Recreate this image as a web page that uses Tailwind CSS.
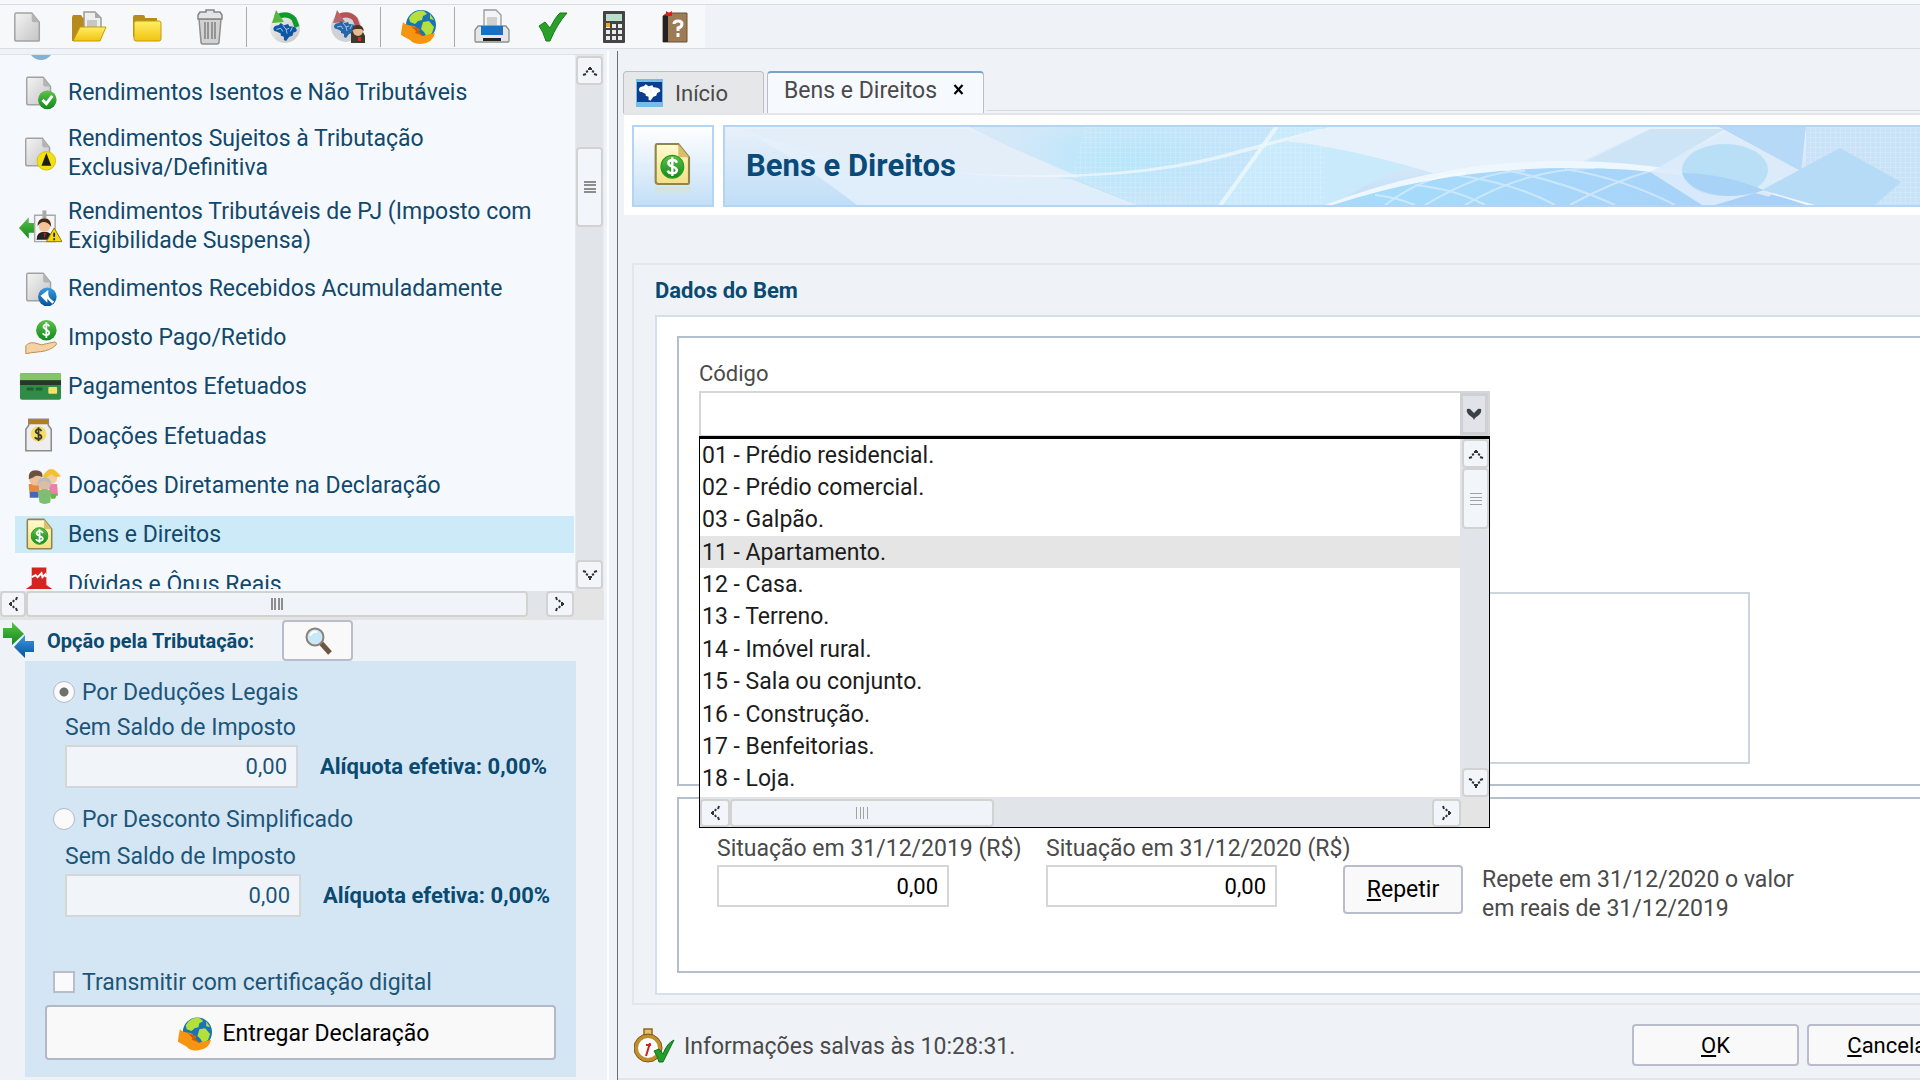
<!DOCTYPE html>
<html lang="pt-BR">
<head>
<meta charset="utf-8">
<title>Bens e Direitos</title>
<script src="https://cdn.jsdelivr.net/npm/@tailwindcss/browser@4"></script>
</head>
<body class="bg-[#eff3f8] font-['Roboto',sans-serif] text-[23px] leading-[29px] text-[#4a4a4a]">
<svg class="absolute h-0 w-0" aria-hidden="true">
  <defs>
    <linearGradient id="gGrey" x1="0" y1="0" x2="1" y2="1"><stop offset="0" stop-color="#f4f4f4"/><stop offset="1" stop-color="#c4c4c4"/></linearGradient>
    <linearGradient id="gYel" x1="0" y1="0" x2="0" y2="1"><stop offset="0" stop-color="#ffee66"/><stop offset="1" stop-color="#f2c40f"/></linearGradient>
    <linearGradient id="gCream" x1="0" y1="0" x2="0" y2="1"><stop offset="0" stop-color="#fffbd0"/><stop offset="1" stop-color="#f3df86"/></linearGradient>
    <linearGradient id="gGreen" x1="0" y1="0" x2="0" y2="1"><stop offset="0" stop-color="#5fc04a"/><stop offset="1" stop-color="#0f8a1c"/></linearGradient>
    <linearGradient id="gBlue" x1="0" y1="0" x2="0" y2="1"><stop offset="0" stop-color="#3b9be0"/><stop offset="1" stop-color="#07519c"/></linearGradient>
    <linearGradient id="gBan" x1="0" y1="0" x2="0" y2="1"><stop offset="0" stop-color="#e9f1fa"/><stop offset="1" stop-color="#c0def7"/></linearGradient>
  </defs>
  <symbol id="up" viewBox="0 0 16 12"><path d="M1 10l3-1M4 7l2-1M6 4h4M8 2v1M10 6l2 1M12 9l3 1" stroke="#333" stroke-width="2" fill="none"/></symbol>
  <symbol id="down" viewBox="0 0 16 12"><path d="M1 2l3 1M4 5l2 1M6 8h4M8 9v2M10 6l2-1M12 3l3-1" stroke="#333" stroke-width="2" fill="none"/></symbol>
  <symbol id="left" viewBox="0 0 12 16"><path d="M10 1l-1 3M7 4l-1 2M4 6v4M2 8h1M6 10l1 2M9 12l1 3" stroke="#333" stroke-width="2" fill="none"/></symbol>
  <symbol id="right" viewBox="0 0 12 16"><path d="M2 1l1 3M5 4l1 2M8 6v4M9 8h1M6 10l-1 2M3 12l-1 3" stroke="#333" stroke-width="2" fill="none"/></symbol>
  <symbol id="page" viewBox="0 0 32 34"><path d="M3 2h17l8 10v19q0 1-1 1H4q-2 0-2-2V4q0-2 1-2z" fill="url(#gGrey)" stroke="#a2a2a2" stroke-width="1.6"/><path d="M20 2v8q0 2 2 2h6z" fill="#b4b4b4"/></symbol>
  <symbol id="globe" viewBox="0 0 38 36"><circle cx="22" cy="16" r="15" fill="#1874b4"/><path d="M13 5q6-5 12-3l3 3-4 2-1 4-4 1-3 3-5-2-1-4zM24 13l6-1 5 6-2 6-5 4-3-5-3-3zM31 5l4 6-4-1z" fill="#b4e03c"/><path d="M4 13q2 3 11 4l6 4-3 2 5 4 13-3q-2 10-14 11-8 0-11-4l-9-5q0-3 2-13z" fill="#f79410"/><path d="M12 17l9 3-2 2 6 5-9-3 1-2z" fill="#cf5c05"/></symbol>
  <symbol id="brazil" viewBox="0 0 24 18"><path d="M1 6q1-3 5-3l2-2 3 2 4-1 1 2q6 0 7 3 1 2-3 3l-1 3-3 1-3 4-2-1 0-3-3-1 0-2-4-2q-3 0-3-3z"/><path d="M4 7l4-1 2 3M10 3l3 4 3-1M13 7l1 4M19 5l-2 4" stroke="#dfe8f2" stroke-width=".7" fill="none"/></symbol>
  <symbol id="moneydoc" viewBox="0 0 30 34"><path d="M3 2h16l8 10v19q0 1-1 1H4q-2 0-2-2V4q0-2 1-2z" fill="url(#gCream)" stroke="#93854a" stroke-width="1.6"/><path d="M19 2v10h8z" fill="#d9bf6b"/><circle cx="14.500" cy="19" r="8.500" fill="url(#gGreen)" stroke="#2e9d1f"/><path d="M18 16q-1-2-3.500-2t-3 2q0 2 3.200 3t3.200 3q-.5 2-3.400 2t-3.500-2M14.500 12v14" fill="none" stroke="#fff" stroke-width="1.800"/></symbol>
</svg>

<div class="flex min-h-screen flex-col overflow-hidden">
  <div class="h-1 shrink-0 bg-[#f7f8fa]"></div>
  <header class="flex h-[45px] shrink-0 border-y border-[#d6dde4]">
    <nav aria-label="Barra de ferramentas" class="flex w-[705px] items-center bg-[#f7f8fa] pt-px pl-3">
      <button class="w-[59px]" aria-label="Novo"><svg class="h-8 w-8"><use href="#page"/></svg></button>
      <button class="w-[60px]" aria-label="Abrir"><svg class="h-8 w-9" viewBox="0 0 36 32"><path d="M1 6l1-2h8l2 3h3v23H1z" fill="#b88a1a"/><path d="M13 1h11l6 6v17H13z" fill="#eee" stroke="#9a9a9a" stroke-width="1.500"/><path d="M24 1v6h6z" fill="#aaa"/><path d="M16 9h10v12H16z" fill="#c6c6c6"/><path d="M9 16h26L29 30H2z" fill="url(#gYel)" stroke="#c39a10"/></svg></button>
      <button class="w-[58px]" aria-label="Fechar"><svg class="h-8 w-8" viewBox="0 0 32 32"><path d="M2 26V6q0-2 2-2h8q2 0 2 3h12v4z" fill="#b88a1a"/><path d="M5 10h23q2 0 2 2v16q0 2-2 2H5q-2 0-2-2V12q0-2 2-2z" fill="url(#gYel)" stroke="#c39a10"/></svg></button>
      <button class="w-[57px] pl-[7px]" aria-label="Excluir"><svg class="h-9 w-7" viewBox="0 0 28 36"><path d="M3 10h22l-2 23q0 2-2 2H7q-2 0-2-2z" fill="#d2d2d2" stroke="#8f8f8f" stroke-width="1.500"/><path d="M2 6l2-3h6V1h8v2h6l2 3v4H2z" fill="#e4e4e4" stroke="#858585" stroke-width="1.500"/><path d="M9 13v17M12 13v17M16 13v17M19 13v17" stroke="#868686" stroke-width="1.600"/></svg></button>
      <span class="h-10 w-px bg-[#a9a9a9]"></span>
      <button class="w-[61px] pl-[22px]" aria-label="Importar"><svg class="h-9 w-8" viewBox="0 0 32 36"><circle cx="16" cy="19" r="15" fill="url(#gGrey)"/><path d="M8 8q10-5 17 2l3 8" fill="none" stroke="#0f9a2c" stroke-width="5"/><path d="M7 1L3 14l12-1z" fill="#55b83a"/><svg x="3" y="13" width="26" height="19" fill="#0b57a6"><use href="#brazil"/></svg></svg></button>
      <button class="w-[72px] pl-[22px]" aria-label="Restaurar"><svg class="h-9 w-9" viewBox="0 0 36 36"><circle cx="16" cy="18" r="15" fill="#d0d2d5"/><path d="M8 8q10-5 17 2l3 8" fill="none" stroke="#b55158" stroke-width="5"/><path d="M7 1L3 14l12-1z" fill="#b8656a"/><svg x="3" y="11" width="24" height="18" fill="#2468aa"><use href="#brazil"/></svg><path d="M21 34V24l4-5h6l4 8v7z" fill="#3e3a30"/><circle cx="28" cy="22" r="5" fill="#e9b98f"/><path d="M22 21q1-5 6-5t6 6l-3-2-5 0z" fill="#4b3222"/><path d="M28 28h3v4h-3z" fill="#e3261c"/></svg></button>
      <span class="h-10 w-px bg-[#a9a9a9]"></span>
      <button class="w-[73px] pl-[17px]" aria-label="Transmitir"><svg class="h-9 w-10"><use href="#globe"/></svg></button>
      <span class="h-10 w-px bg-[#a9a9a9]"></span>
      <button class="w-[78px] pl-[19px]" aria-label="Imprimir"><svg class="h-9 w-9" viewBox="0 0 36 36"><path d="M10 1h12l5 5v15H10z" fill="#f4f4f4" stroke="#999" stroke-width="1.300"/><path d="M13 8h10v9H13z" fill="#cfcfcf"/><path d="M4 17h28l3 4v11q0 1-1 1H2q-1 0-1-1V21z" fill="#e6e6e6" stroke="#8e8e8e" stroke-width="1.300"/><path d="M7 17h22v9H7z" fill="#1670c6"/><path d="M9 29h18v3H9z" fill="#222"/></svg></button>
      <button class="w-[62px] pl-1" aria-label="Verificar"><svg class="h-8 w-8" viewBox="0 0 32 32"><path d="M2 15l6-4 5 6Q19 5 23 2h7Q20 13 13 30H9Q6 20 2 15z" fill="#2aa02a" stroke="#177a1c"/></svg></button>
      <button class="w-[62px] pl-[7px]" aria-label="Calculadora"><svg class="h-9 w-6" viewBox="0 0 24 34"><rect x="1" y="1" width="22" height="32" rx="1" fill="#444"/><path d="M4 4h16v7H4z" fill="#b9dfc9"/><path d="M4 14h4v4H4zM4 20h4v4H4zM4 26h4v4H4zM10 14h4v4h-4zM10 20h4v4h-4zM10 26h4v4h-4zM16 14h4v4h-4zM16 20h4v4h-4zM16 26h4v4h-4z" fill="#ececec"/><path d="M4 13h4v4H4z" fill="#f6a81c"/></svg></button>
      <button class="pl-1" aria-label="Ajuda"><svg class="h-9 w-7" viewBox="0 0 28 36"><path d="M2 7l4-3h20v29H2z" fill="#9c7b56" stroke="#6c5236"/><path d="M2 7l5-2v28H2z" fill="#222"/><path d="M5 2l3 2 3-2v5H5z" fill="#dd1c1c"/><path d="M13 15q0-3 4-3t4 3q0 3-4 4v3M17 24v4" stroke="#fff" stroke-width="3" fill="none"/></svg></button>
    </nav>
  </header>

  <div class="flex flex-1">
    <!-- Painel lateral -->
    <aside class="flex w-[604px] shrink-0 flex-col pt-[5px]">
      <div class="flex h-[537px] border-t border-[#dde2e6] bg-[#f5f9fd]">
        <nav aria-label="Fichas" class="mb-0.5 flex flex-1 flex-col gap-3 overflow-hidden pr-px text-[#12486b]">
          <a href="#" class="flex h-[7px] shrink-0 items-start pl-[31px]" aria-label="Ficha anterior"><svg class="h-[5px] w-5" viewBox="0 0 20 5"><path d="M0 0h20q-4 5-10 5T0 0z" fill="#7fb3d6"/></svg></a>
          <a href="#" class="ml-[15px] flex h-[37px] shrink-0 items-center gap-1.5 pl-1"><svg class="h-10 w-[43px]" viewBox="0 0 44 40"><svg x="6" y="2" width="30" height="32"><use href="#page"/></svg><circle cx="29" cy="27" r="9.500" fill="url(#gGreen)"/><path d="M24 27l4 4 6-8" stroke="#fff" stroke-width="3" fill="none"/></svg>Rendimentos Isentos e Não Tributáveis</a>
          <a href="#" class="ml-[15px] flex h-[61px] shrink-0 items-center gap-1.5 pb-0.5 pl-1"><svg class="h-10 w-[43px]" viewBox="0 0 44 40"><svg x="5" y="3" width="30" height="32"><use href="#page"/></svg><circle cx="28" cy="28" r="9.500" fill="#f2e010" stroke="#d6c20e"/><path d="M28 20l5 13H23z" fill="#1d1d12"/></svg><span>Rendimentos Sujeitos à Tributação<br>Exclusiva/Definitiva</span></a>
          <a href="#" class="ml-[15px] flex h-[62px] shrink-0 items-center gap-1.5 pb-0.5 pl-1"><svg class="h-10 w-[43px]" viewBox="0 0 44 40"><path d="M0 22L10 11v6h6v10h-6v6z" fill="url(#gGreen)"/><path d="M16 9h21v27H16z" fill="#f5f5f5" stroke="#a8a8a8" stroke-width="1.500"/><path d="M24 4h4v8h-4z" fill="#aaa"/><path d="M18 34q0-8 8-8t9 8z" fill="#222"/><circle cx="26" cy="20" r="6" fill="#f0c49c"/><path d="M19 20q0-8 7-8t7 9q-3-5-8-5-3 0-6 4z" fill="#4a2a18"/><path d="M25 27l1 6 2-6z" fill="#b02020"/><path d="M36 22l8 14H28z" fill="#f6d90d" stroke="#8b7a08"/><path d="M36 27v4M36 32.500v2" stroke="#222" stroke-width="1.800"/></svg><span>Rendimentos Tributáveis de PJ (Imposto com<br>Exigibilidade Suspensa)</span></a>
          <a href="#" class="ml-[15px] flex h-[37px] shrink-0 items-center gap-1.5 pl-1"><svg class="h-10 w-[43px]" viewBox="0 0 44 40"><svg x="6" y="2" width="30" height="32"><use href="#page"/></svg><circle cx="29" cy="28" r="9.500" fill="url(#gBlue)"/><path d="M22 27l8-6v4q0 4 6 8l-2 2-5-5v4z" fill="#fff"/></svg>Rendimentos Recebidos Acumuladamente</a>
          <a href="#" class="ml-[15px] flex h-[37px] shrink-0 items-center gap-1.5 pl-1"><svg class="h-10 w-[43px]" viewBox="0 0 44 40"><circle cx="28" cy="12" r="10.500" fill="url(#gGreen)"/><path d="M31 8q-1-2-3-2t-3 2q0 2 3 3.500t3 3.500q0 2-3 2t-3.500-2M28 4v16" stroke="#fff" stroke-width="1.800" fill="none"/><path d="M7 36V28q3-4 9-3l7 2q4-1 14-3 2 1 1 3-6 6-16 7l-9 1z" fill="#f4d2a4" stroke="#c08a4c"/></svg>Imposto Pago/Retido</a>
          <a href="#" class="ml-[15px] flex h-[37px] shrink-0 items-center gap-1.5 pl-1"><svg class="h-10 w-[43px]" viewBox="0 0 44 40"><rect x="1" y="6" width="42" height="27" rx="2" fill="#2f8b46"/><path d="M1 6h42v7H1z" fill="#86c46c"/><path d="M1 13h42v5H1z" fill="#26382b"/><rect x="30" y="20" width="9" height="7" rx="1" fill="#eee36c"/><path d="M8 22h7M17 22h7" stroke="#1e6330" stroke-width="3"/></svg>Pagamentos Efetuados</a>
          <a href="#" class="ml-[15px] flex h-[38px] shrink-0 items-center gap-1.5 pl-1"><svg class="h-10 w-[43px]" viewBox="0 0 44 40"><path d="M10 3h20v6l3 4v22H7V13l3-4z" fill="#eeeef0" stroke="#8c8c8c" stroke-width="1.600"/><path d="M10 3h20v5H10z" fill="#b27d24"/><circle cx="20" cy="18" r="8" fill="#f6dc62"/><path d="M23 15q-1-2-3-2t-3 2q0 2 3 3t3 3q0 2-3 2t-3.500-2M20 11v14" stroke="#3b3a2e" stroke-width="1.800" fill="none"/></svg>Doações Efetuadas</a>
          <a href="#" class="ml-[15px] flex h-[37px] shrink-0 items-center gap-1.5 pl-1"><svg class="h-10 w-[43px]" viewBox="0 0 44 40"><path d="M10 18h11v12H12q-2-4-2-12z" fill="#e58a3d"/><path d="M11 26h9v6h-9z" fill="#4467b8"/><circle cx="17" cy="13" r="6.500" fill="#edc09b"/><path d="M10 13q-1-9 7-9t7 7q-6-3-9 0z" fill="#6b5140"/><path d="M30 18h9l1 12h-8z" fill="#ee7fa8"/><path d="M32 28h7l-2 5h-4z" fill="#5dbb46"/><circle cx="33" cy="12" r="6" fill="#f4cba2"/><path d="M24 10l4-5q5-5 10 0l5 5-5 1-5-3-6 4z" fill="#f5c12e"/><circle cx="26" cy="18" r="6.500" fill="#dcbea6"/><path d="M19 19q0-8 7-8t7 8q-3-4-7-4t-7 4z" fill="#b9bcbc"/><path d="M19 25q7-4 14 0l-1 12q-6 3-11 0z" fill="#7cbf70"/></svg>Doações Diretamente na Declaração</a>
          <a href="#" aria-current="page" class="ml-[15px] flex h-[37px] shrink-0 items-center gap-1.5 bg-[#cdeaf9] pl-1"><svg class="h-10 w-[43px]" viewBox="0 0 44 40"><svg x="6" y="2" width="31" height="34"><use href="#moneydoc"/></svg></svg>Bens e Direitos</a>
          <a href="#" class="ml-[15px] flex h-[38px] shrink-0 items-center gap-1.5 pl-1"><svg class="h-10 w-[43px]" viewBox="0 0 44 40"><path d="M13 3h15v18l6 4v5H7v-5l6-4z" fill="#d62520"/><path d="M13 13l4-2 2 2 4-4 1 4 3-3 1 3" stroke="#fff" stroke-width="2" fill="none"/></svg>Dívidas e Ônus Reais</a>
        </nav>
        <div class="flex w-[29px] flex-col border-x border-[#e8ecf0] bg-[#e1e5ea]">
          <button aria-label="Rolar para cima" class="mt-px flex h-[29px] items-center justify-center rounded-sm border-2 border-[#d2d2d2] bg-[#f2f5fa]"><svg class="h-3 w-4"><use href="#up"/></svg></button>
          <div class="mt-[62px] flex h-20 items-center justify-center rounded-sm border-2 border-[#d2d2d2] bg-[#f2f5fa]"><svg class="h-[14px] w-3" viewBox="0 0 12 14"><path d="M0 2h12M0 5h12M0 9h12M0 12h12" stroke="#8d8d8d" stroke-width="2"/></svg></div>
          <button aria-label="Rolar para baixo" class="mt-auto mb-0.5 flex h-[29px] items-center justify-center rounded-sm border-2 border-[#d2d2d2] bg-[#f2f5fa]"><svg class="h-3 w-4"><use href="#down"/></svg></button>
        </div>
      </div>
      <div class="flex h-[29px] bg-[#e4e4e4] pb-[3px]">
        <div class="flex w-[574px] bg-[#e1e5ea]">
          <button aria-label="Rolar para a esquerda" class="flex w-[26px] items-center justify-center rounded-sm border-2 border-[#d2d2d2] bg-[#f2f5fa]"><svg class="h-4 w-3"><use href="#left"/></svg></button>
          <div class="flex w-[502px] items-center justify-center rounded-sm border-2 border-[#d2d2d2] bg-[#f0f3f8]"><svg class="h-3 w-[14px]" viewBox="0 0 14 12"><path d="M2 0v12M5 0v12M9 0v12M12 0v12" stroke="#8d8d8d" stroke-width="2"/></svg></div>
          <button aria-label="Rolar para a direita" class="ml-auto flex w-7 items-center justify-center rounded-sm border-2 border-[#d2d2d2] bg-[#f2f5fa]"><svg class="h-4 w-3"><use href="#right"/></svg></button>
        </div>
      </div>

      <section class="flex flex-col text-[#1c5578]">
        <div class="flex h-[41px] items-center">
          <svg class="h-10 w-[35px] shrink-0" viewBox="0 0 35 40"><path d="M3 7h9V1l12 12-12 11v-7H3z" fill="url(#gGreen)"/><path d="M34 20h-9v-6L14 26l11 11v-6h9z" fill="url(#gBlue)"/></svg>
          <h2 class="w-[247px] pt-0.5 pl-3 text-[20px] font-bold text-[#0a4a70]">Opção pela Tributação:</h2>
          <button aria-label="Comparar opções" class="flex h-[41px] w-[71px] items-center justify-center rounded-sm border-2 border-[#b9bccb] bg-[#f9f9f9]"><svg class="h-7 w-7" viewBox="0 0 28 28"><path d="M17 16l9 10" stroke="#6f5640" stroke-width="5"/><circle cx="11" cy="10" r="8.500" fill="#c7e8f8" stroke="#8b8178" stroke-width="2"/><path d="M6 9q2-5 7-4" stroke="#fff" stroke-width="2" fill="none"/></svg></button>
        </div>
        <div class="ml-[25px] flex h-[416px] w-[551px] flex-col bg-[#d4e6f4] pt-4">
          <label class="flex h-[30px] items-center gap-[7px] pl-7"><input type="radio" name="opcao" checked class="h-[22px] w-[22px] appearance-none rounded-full border border-[#b4b9c8] bg-[#fafafa] bg-[radial-gradient(circle,#6f6f6f_4px,transparent_5px)]">Por Deduções Legais</label>
          <label for="s1" class="mt-1 h-[33px] pl-10 leading-[34px]">Sem Saldo de Imposto</label>
          <div class="mt-px flex items-center gap-[22px] pl-10 text-[22px]"><input id="s1" readonly value="0,00" class="h-[43px] w-[233px] border-2 border-[#d4d6d8] bg-[#f1f5fa] pr-[9px] text-right"><strong class="font-bold text-[#0a4a70]">Alíquota efetiva: 0,00%</strong></div>
          <label class="mt-4 flex h-[30px] items-center gap-[7px] pl-7"><input type="radio" name="opcao" class="h-[22px] w-[22px] appearance-none rounded-full border border-[#b4b9c8] bg-[#fafafa]">Por Desconto Simplificado</label>
          <label for="s2" class="mt-1.5 h-[33px] pl-10 leading-[34px]">Sem Saldo de Imposto</label>
          <div class="mt-px flex items-center gap-[22px] pl-10 text-[22px]"><input id="s2" readonly value="0,00" class="h-[43px] w-[236px] border-2 border-[#d4d6d8] bg-[#f1f5fa] pr-[9px] text-right"><strong class="font-bold text-[#0a4a70]">Alíquota efetiva: 0,00%</strong></div>
          <label class="mt-[50px] flex h-[30px] items-center gap-[7px] pl-7"><input type="checkbox" class="h-[22px] w-[22px] appearance-none border-2 border-[#b9bccb] bg-[#fafafa]">Transmitir com certificação digital</label>
          <button class="mt-2 ml-5 flex h-[55px] w-[511px] items-center justify-center gap-2.5 rounded-sm border-2 border-[#b3b8c8] bg-[#f9f9f9] pt-0.5 pl-1 text-black"><svg class="h-9 w-[37px]"><use href="#globe"/></svg>Entregar Declaração</button>
        </div>
      </section>
    </aside>
    <div class="mt-0.5 flex w-[14px] shrink-0 border-r border-[#6e6e6e] pl-[3px]"><span class="w-0.5 bg-white"></span></div>

    <!-- Ficha principal -->
    <main class="flex min-w-0 flex-1 flex-col overflow-hidden border-b-2 border-[#e2e4e6] pl-[5px]">
      <div class="mt-[22px] flex h-11 items-end gap-[3px] border-b-2 border-[#e4e5e7]">
        <button class="flex h-[42px] w-[141px] items-center gap-3 rounded-t-sm border border-b-0 border-[#bcbec0] bg-[#e6e7e8] pl-3 text-[22px]"><svg class="h-7 w-[27px]" viewBox="0 0 27 28"><rect width="27" height="28" fill="#74bde6"/><path d="M1 3h25v20H1z" fill="#0b3d91"/><svg x="2" y="4" width="23" height="18" fill="#fff"><use href="#brazil"/></svg></svg><span class="pt-0.5">Início</span></button>
        <div class="flex h-[42px] w-[217px] items-start gap-4 rounded-t-sm border border-t-2 border-b-0 border-[#b9bec6] border-t-[#7ba4c4] bg-[#f6f9fe] pt-[3px] pl-4"><span>Bens e Direitos</span><button aria-label="Fechar aba" class="pt-2"><svg class="h-[11px] w-[11px]" viewBox="0 0 11 11"><path d="M1.500 1l8 9M9.500 1l-8 9" stroke="#000" stroke-width="2.200"/></svg></button></div>
        <span class="mb-0.5 h-px flex-1 bg-[#d5dbe3]"></span>
      </div>
      <div class="ml-px flex h-[100px] gap-[9px] bg-white pt-2.5 pb-2 pl-2">
        <div class="flex w-[82px] shrink-0 flex-col items-center border-2 border-[#b3d5f3] bg-linear-to-b from-white to-[#c3dff6] pt-3.5"><svg class="h-[46px] w-10"><use href="#moneydoc"/></svg><span class="h-2 w-9 bg-linear-to-b from-[#d5e3d4] to-transparent"></span></div>
        <div class="relative flex-1 overflow-hidden border-y-2 border-l-2 border-[#b3d5f3]">
          <svg class="absolute inset-0 h-full w-full" viewBox="0 0 1196 78" preserveAspectRatio="xMinYMin slice">
            <defs>
              <radialGradient id="cy"><stop offset="0" stop-color="#b4e6fb"/><stop offset="1" stop-color="#b4e6fb" stop-opacity="0"/></radialGradient>
              <linearGradient id="mid" x1="0" x2="1"><stop offset="0" stop-color="#d9e9f8"/><stop offset=".5" stop-color="#c6e6f9"/><stop offset="1" stop-color="#c4e4fa"/></linearGradient>
              <pattern id="mesh" width="5" height="5" patternUnits="userSpaceOnUse"><path d="M0 0h5M0 0v5" stroke="#fff" stroke-opacity=".25"/></pattern>
              <linearGradient id="dome" x1="0" x2="1"><stop offset="0" stop-color="#a5dcfb"/><stop offset="1" stop-color="#a9d0f8"/></linearGradient>
            </defs>
            <rect width="1196" height="78" fill="url(#gBan)"/>
            <path d="M244 0h305L493 78H412L346 50z" fill="url(#mid)"/>
            <ellipse cx="400" cy="32" rx="120" ry="40" fill="url(#cy)" opacity=".8"/>
            <path d="M16 2q110 40 212 44l118 6 66 26H132Q70 30 16 2z" fill="#e4f0fb" opacity=".85"/>
            <path d="M16 2h228l110 48q-70 4-126-4Q126 42 16 2z" fill="#e4eef9"/>
            <path d="M549 0L493 78h115q60-40 110-44L600 0z" fill="#c8eafb"/>
            <path d="M360 0h240v78H412L346 50z" fill="url(#mesh)"/>
            <path d="M228 46q170 14 289-20L604 2h-10l-77 20q-110 34-289 24z" fill="#edf6fd" opacity=".8"/>
            <path d="M549 0L493 78h5L554 0z" fill="#eef7fd" opacity=".8"/>
            <path d="M604 0h321L851 38q-80-2-143 8Q620 20 560 14z" fill="#e7f1fb"/>
            <path d="M925 2h75L925 45l-74-5z" fill="#cde4f7"/>
            <path d="M994 0h87l-5 44z" fill="#b5d9f7"/>
            <path d="M1081 0h115v78h-115z" fill="#c9e2f8"/><path d="M1081 0h115v78h-115z" fill="url(#mesh)"/>
            <path d="M600 78Q720 32 847 34t250 44h-16Q960 40 847 41T608 78z" fill="#eef7fd"/>
            <path d="M608 78Q720 41 847 41t234 37z" fill="url(#dome)"/>
            <path d="M660 78q40-30 80-32M700 78q60-36 100-34M740 78q60-36 130-37M845 78q40-22 80-34M780 43q60 12 110 35M840 42q60 10 110 36M730 48q60 8 100 30M690 58q40 4 70 20M650 68q20 2 40 10" stroke="#fff" stroke-opacity=".4" stroke-width="2" fill="none"/>
            <path d="M1000 5l75 39-41 34H977L925 45z" fill="#dcebfa" opacity=".9"/>
            <ellipse cx="1000" cy="43" rx="43" ry="26" fill="#b9dff6"/><path d="M957 46q40 0 82 17-15 6-38 6-36-3-44-23z" fill="#a9d3f6"/>
            <path d="M1115 21l61 34-26 23h-60l-53-15z" fill="#b6dbf7"/>
            <path d="M990 78l40-12 45 12z" fill="#a9d0f8"/>
          </svg>
          <h1 class="relative pt-5 pl-[21px] text-[31px] leading-[38px] font-bold text-[#0a4a78]">Bens e Direitos</h1>
        </div>
      </div>

      <section class="mt-12 ml-[9px] flex h-[742px] flex-col border-2 border-r-0 border-[#e4e6e8] pl-[21px]">
        <h2 class="h-[50px] pt-[11px] text-[22px] font-bold text-[#0a4a70]">Dados do Bem</h2>
        <div class="flex h-[680px] flex-col gap-[11px] border-2 border-r-0 border-[#d3dfea] bg-white pt-[19px] pl-5">
          <div class="relative h-[450px] border-2 border-r-0 border-[#b3bfcc] pt-5 pl-5">
            <label for="codigo" class="block h-[33px] pt-px text-[22px]">Código</label>
            <div class="relative w-[791px]">
              <select id="codigo" class="block h-[46px] w-full appearance-none border-2 border-[#d4d6d8] bg-white"><option></option></select>
              <span class="pointer-events-none absolute top-0.5 right-0.5 flex h-[42px] w-7 items-center justify-center border-[3px] border-[#cfd0d3] bg-[#e1e3e8]"><svg class="h-3 w-4" viewBox="0 0 16 12"><path d="M1 1q3-1 4 1l3 3 3-3q1-2 4-1 1 3-2 6l-4 3-1 2-1-2-4-3q-3-3-2-6z" fill="#3c4147"/></svg></span>
              <!-- Lista aberta do código -->
              <div class="absolute top-[45px] left-0 z-10 w-full border border-t-[3px] border-black bg-white text-[#1c1c1c]">
                <div class="flex h-[358px]">
                  <ul role="listbox" aria-label="Código" class="flex flex-1 flex-col pb-0.5">
                    <li role="option" class="flex flex-1 items-center pl-0.5">01 - Prédio residencial.</li>
                    <li role="option" class="flex flex-1 items-center pl-0.5">02 - Prédio comercial.</li>
                    <li role="option" class="flex flex-1 items-center pl-0.5">03 - Galpão.</li>
                    <li role="option" aria-selected="true" class="flex flex-1 items-center bg-[#e5e5e5] pl-0.5">11 - Apartamento.</li>
                    <li role="option" class="flex flex-1 items-center pl-0.5">12 - Casa.</li>
                    <li role="option" class="flex flex-1 items-center pl-0.5">13 - Terreno.</li>
                    <li role="option" class="flex flex-1 items-center pl-0.5">14 - Imóvel rural.</li>
                    <li role="option" class="flex flex-1 items-center pl-0.5">15 - Sala ou conjunto.</li>
                    <li role="option" class="flex flex-1 items-center pl-0.5">16 - Construção.</li>
                    <li role="option" class="flex flex-1 items-center pl-0.5">17 - Benfeitorias.</li>
                    <li role="option" class="flex flex-1 items-center pl-0.5">18 - Loja.</li>
                  </ul>
                  <div class="flex w-[29px] flex-col bg-[#e1e5ea] pl-0.5">
                    <button aria-label="Rolar para cima" class="flex h-[29px] items-center justify-center rounded-sm border-2 border-[#d2d2d2] bg-[#f2f5fa]"><svg class="h-3 w-4"><use href="#up"/></svg></button>
                    <div class="flex h-[61px] items-center justify-center rounded-sm border-2 border-[#d2d2d2] bg-[#f2f5fa]"><svg class="h-[14px] w-3" viewBox="0 0 12 14"><path d="M0 1.500h12M0 5.500h12M0 8.500h12M0 12.500h12" stroke="#a2a2a2" stroke-width="1"/></svg></div>
                    <button aria-label="Rolar para baixo" class="mt-auto flex h-[29px] items-center justify-center rounded-sm border-2 border-[#d2d2d2] bg-[#f2f5fa]"><svg class="h-3 w-4"><use href="#down"/></svg></button>
                  </div>
                </div>
                <div class="flex h-[30px] bg-[#e4e4e4]">
                  <div class="flex w-[761px] bg-[#e1e5ea] pt-0.5">
                    <button aria-label="Rolar para a esquerda" class="flex w-[30px] items-center justify-center rounded-sm border-2 border-[#d2d2d2] bg-[#f2f5fa]"><svg class="h-4 w-3"><use href="#left"/></svg></button>
                    <div class="flex w-[264px] items-center justify-center rounded-sm border-2 border-[#d2d2d2] bg-[#f0f3f8]"><svg class="h-3 w-[14px]" viewBox="0 0 14 12"><path d="M1.500 0v12M5.500 0v12M8.500 0v12M12.500 0v12" stroke="#a2a2a2" stroke-width="1"/></svg></div>
                    <button aria-label="Rolar para a direita" class="ml-auto flex w-[29px] items-center justify-center rounded-sm border-2 border-[#d2d2d2] bg-[#f2f5fa]"><svg class="h-4 w-3"><use href="#right"/></svg></button>
                  </div>
                </div>
              </div>
            </div>
            <textarea aria-label="Discriminação" class="mt-[155px] block h-[172px] w-[1051px] resize-none border-2 border-[#ccd5de] bg-white"></textarea>
          </div>
          <div class="flex h-[176px] items-start border-2 border-r-0 border-[#b3bfcc] pt-[35px] pl-[38px]">
            <div class="w-[329px]"><label for="v19" class="block h-[31px] whitespace-nowrap">Situação em 31/12/2019 (R$)</label><input id="v19" value="0,00" class="block h-[42px] w-[232px] border-2 border-[#d4d6d8] bg-white pr-[9px] text-right text-[22px] text-black"></div>
            <div class="w-[297px]"><label for="v20" class="block h-[31px] whitespace-nowrap">Situação em 31/12/2020 (R$)</label><input id="v20" value="0,00" class="block h-[42px] w-[231px] border-2 border-[#d4d6d8] bg-white pr-[9px] text-right text-[22px] text-black"></div>
            <button class="mt-[31px] h-[49px] w-[120px] shrink-0 rounded-sm border-2 border-[#b9bccb] bg-[#f9f9f9] text-black"><u>R</u>epetir</button>
            <p class="mt-[31px] shrink-0 pl-[19px]">Repete em 31/12/2020 o valor<br>em reais de 31/12/2019</p>
          </div>
        </div>
      </section>

      <footer class="flex h-[72px] items-start pt-[19px] pl-[11px]">
        <svg class="mt-1 h-9 w-[41px] shrink-0" viewBox="0 0 41 36"><path d="M10 1h8v6h-8z" fill="#e5c071" stroke="#8f6a1e" stroke-width="1.500"/><circle cx="14" cy="20" r="12" fill="#fff" stroke="#c1902d" stroke-width="4"/><circle cx="14" cy="20" r="14" fill="none" stroke="#7a5818"/><path d="M12 28l4-13M12 17h5" stroke="#d12020" stroke-width="2" fill="none"/><path d="M20 23l5-2 4 5Q33 15 40 12 35 22 29 34h-4Q23 27 20 23z" fill="#23a02c" stroke="#11701a"/></svg>
        <p class="shrink-0 pt-2 pl-[9px]">Informações salvas às 10:28:31.</p>
        <div class="-mr-[54px] ml-auto flex gap-2 text-[22px]"><button class="h-[42px] w-[167px] rounded-sm border-2 border-[#b9bccb] bg-[#f9f9f9] text-black"><u>O</u>K</button><button class="h-[42px] w-[167px] rounded-sm border-2 border-[#b9bccb] bg-[#f9f9f9] text-black"><u>C</u>ancelar</button></div>
      </footer>
    </main>
  </div>
</div>
</body>
</html>
